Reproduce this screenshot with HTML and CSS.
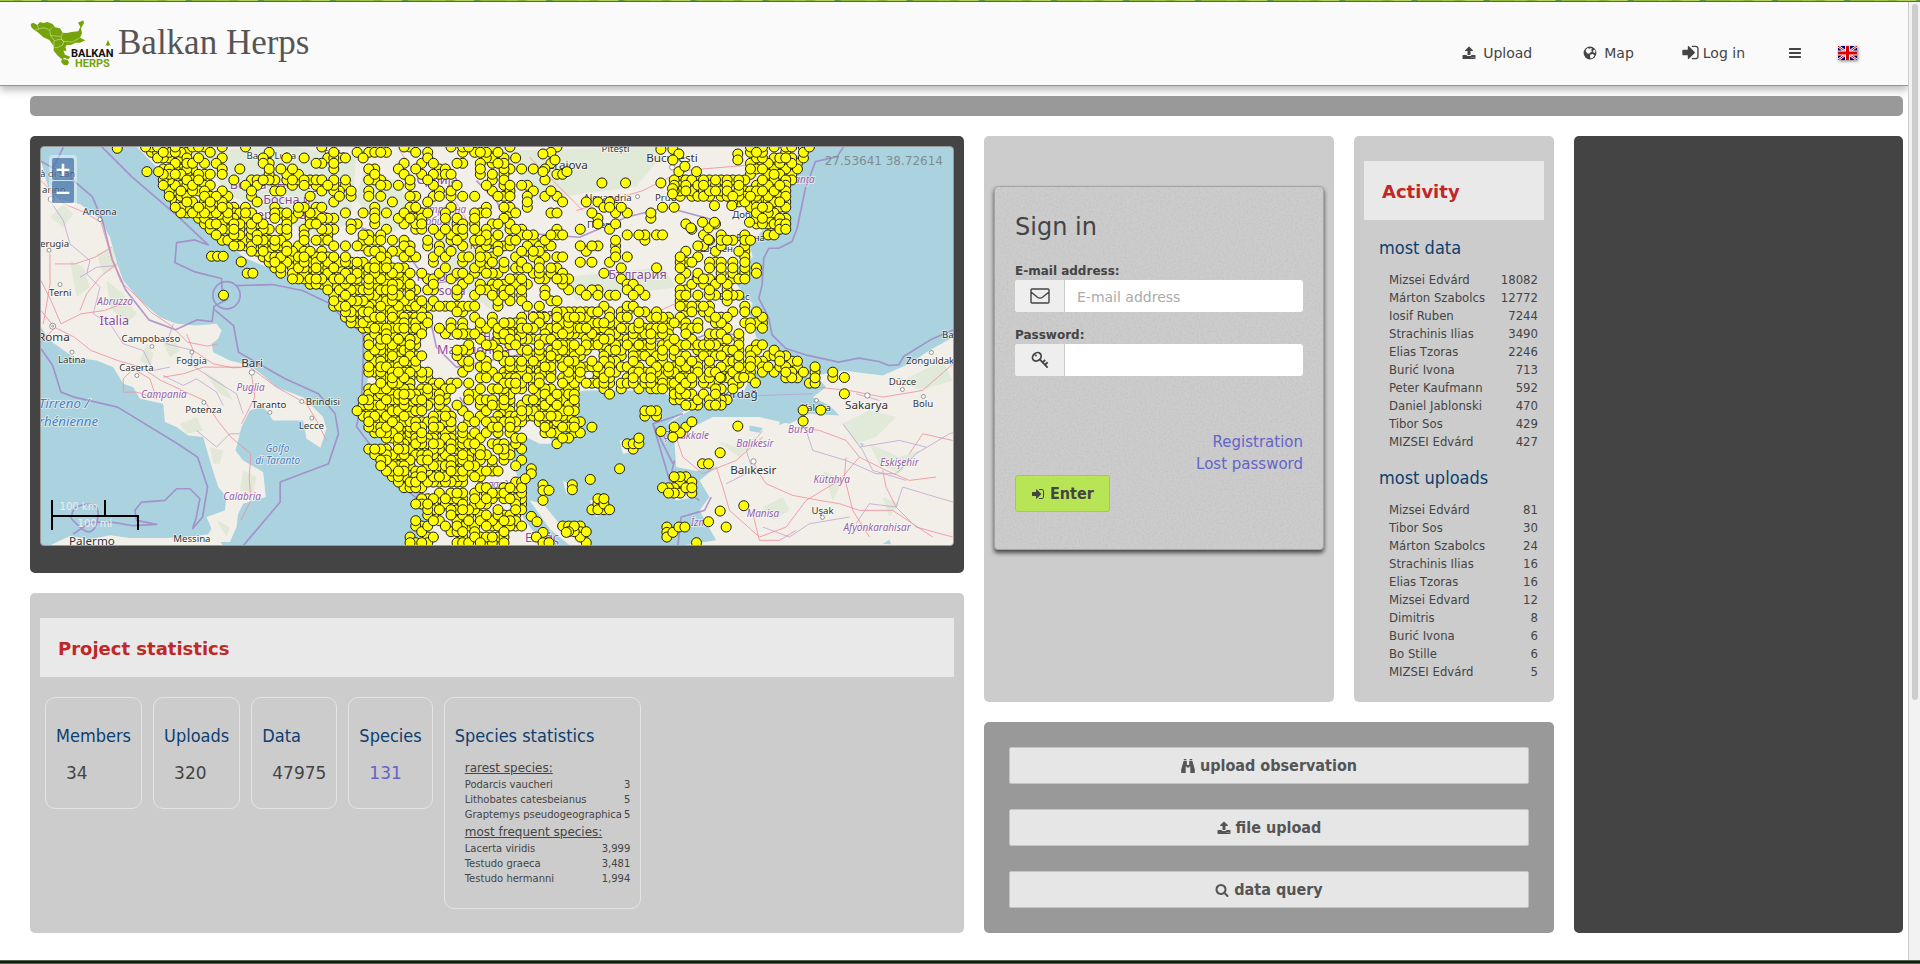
FILE: index.html
```html
<!DOCTYPE html>
<html lang="en">
<head>
<meta charset="utf-8">
<title>Balkan Herps</title>
<link rel="stylesheet" href="styles.css">
</head>
<body>
<svg class="defs" aria-hidden="true">
  <symbol id="i-upload" viewBox="0 0 1792 1792"><path d="M1344 1472q0-26-19-45t-45-19-45 19-19 45 19 45 45 19 45-19 19-45zm256 0q0-26-19-45t-45-19-45 19-19 45 19 45 45 19 45-19 19-45zm128-224v320q0 40-28 68t-68 28h-1472q-40 0-68-28t-28-68v-320q0-40 28-68t68-28h427q21 56 70.500 92t110.500 36h256q61 0 110.500-36t70.500-92h427q40 0 68 28t28 68zm-325-648q-17 40-59 40h-256v448q0 26-19 45t-45 19h-256q-26 0-45-19t-19-45v-448h-256q-42 0-59-40-17-39 14-69l448-448q18-19 45-19t45 19l448 448q31 30 14 69z"/></symbol>
  <symbol id="i-bars" viewBox="0 0 1792 1792"><path d="M1664 1344v128q0 26-19 45t-45 19h-1408q-26 0-45-19t-19-45v-128q0-26 19-45t45-19h1408q26 0 45 19t19 45zm0-512v128q0 26-19 45t-45 19h-1408q-26 0-45-19t-19-45v-128q0-26 19-45t45-19h1408q26 0 45 19t19 45zm0-512v128q0 26-19 45t-45 19h-1408q-26 0-45-19t-19-45v-128q0-26 19-45t45-19h1408q26 0 45 19t19 45z"/></symbol>
  <symbol id="i-signin" viewBox="0 0 1792 1792"><path d="M1312 896q0 26-19 45l-544 544q-19 19-45 19t-45-19-19-45v-288h-448q-26 0-45-19t-19-45v-384q0-26 19-45t45-19h448v-288q0-26 19-45t45-19 45 19l544 544q19 19 19 45zm352-352v704q0 119-84.500 203.500t-203.500 84.500h-320q-13 0-22.500-9.500t-9.500-22.500q0-4-1-20t-.5-26.500 3-23.500 10-19.500 20.500-6.500h320q66 0 113-47t47-113v-704q0-66-47-113t-113-47h-312l-11.500-1-11.500-3-8-5.500-7-9-2-13.500q0-4-1-20t-.5-26.500 3-23.500 10-19.500 20.500-6.500h320q119 0 203.500 84.500t84.500 203.500z"/></symbol>
  <symbol id="i-search" viewBox="0 0 1792 1792"><path d="M1216 832q0-185-131.500-316.500t-316.500-131.500-316.500 131.500-131.500 316.500 131.500 316.500 316.500 131.500 316.500-131.500 131.500-316.500zm512 832q0 52-38 90t-90 38q-54 0-90-38l-343-342q-179 124-399 124-143 0-273.500-55.500t-225-150-150-225-55.500-273.500 55.500-273.500 150-225 225-150 273.500-55.500 273.500 55.500 225 150 150 225 55.500 273.500q0 220-124 399l343 343q37 37 37 90z"/></symbol>
  <symbol id="i-globe" viewBox="0 0 14 14"><circle cx="7" cy="7" r="6.400"/><path d="M4.500 2l2 .8L8 2l1.200.8-1.400 1.400L9.500 5 8 6 6 7.800 4.500 7.400 2.800 5.500 2.800 4zM7.500 8.500L10 8l1.500 1.500L9.500 12l-2 .5L7 10zM10.500 4l1.400-.3.700 2.200-1.200 1-1.400-1z" fill="#fafafa"/></symbol>
  <symbol id="i-binoculars" viewBox="0 0 14 14"><path d="M2.800 0h2.600v1.300H2.800zM8.600 0h2.600v1.300H8.600zM2.600 1.900h3.200V6H8.200V1.900h3.200L13.800 10.600V14H9.300V7.500H8.300v1H5.700v-1H4.700V14H.2v-3.400z"/></symbol>
  <symbol id="i-envelope" viewBox="0 0 20 16"><path d="M2 1h16q1 0 1 1v12q0 1-1 1H2q-1 0-1-1V2q0-1 1-1zM1 4q3.500 2.800 6.500 5.200Q10 11 12.500 9.200 15.500 6.800 19 4" fill="none" stroke="currentColor" stroke-width="1.400"/></symbol>
  <symbol id="i-key" viewBox="0 0 20 20"><g fill="none" stroke="currentColor" stroke-width="2"><ellipse cx="6.500" cy="6.500" rx="5.200" ry="4.200" transform="rotate(-40 6.500 6.500)"/><path d="M9.500 9l9 9.500M12.800 12.800l3-3M15.500 15.500l3-3"/></g><circle cx="5.500" cy="5" r="1"/></symbol>
</svg>

<div class="strip"></div>
<header class="header">
  <a class="brand" href="#">
    <svg class="logo" viewBox="0 0 84 50" role="img" aria-label="Balkan Herps logo">
      <g transform="scale(.3333) translate(-90 -57)">
        <path fill="#76a30a" d="M92 72L100 68 112 75 120 66 130 69 142 66 158 72 165 82 180 85 188 98 200 99 215 96 235 94 241 80 234 68 250 61 252 70 243 85 246 100 240 113 256 121 240 128 226 128 215 134 200 135 196 142 200 152 190 152 195 164 211 170 205 178 192 173 189 178 203 179 207 188 202 196 192 195 183 186 186 178 174 168 161 152 161 138 148 120 130 112 115 98 100 88 94 82z"/>
        <path fill="none" stroke="#e4edc8" stroke-width="1.500" d="M112 75l4 12-12 4M116 87q18-8 32 4l10-10M150 90l2 17 10 14M188 98l-5 14 6 12 28 2 22-12M152 107l30 2M161 138l2-16 20-5 8 8-3 10-16 8-10 0"/>
        <path fill="#76a30a" d="M324 120l8 18-4-3-5 4-4-4-3 3z"/>
      </g>
      <text class="logo-a" x="41" y="38">BALKAN</text>
      <text class="logo-b" x="45" y="48">HERPS</text>
    </svg>
    <span class="brand-name">Balkan Herps</span>
  </a>
  <nav class="nav">
    <a href="#"><svg class="icon"><use href="#i-upload"/></svg>Upload</a>
    <a href="#"><svg class="icon"><use href="#i-globe"/></svg>Map</a>
    <a href="#" class="nav-login"><svg class="icon icon-lg"><use href="#i-signin"/></svg>Log in</a>
    <button type="button" aria-label="Menu"><svg class="icon"><use href="#i-bars"/></svg></button>
    <a href="#" aria-label="English"><svg class="flag" viewBox="0 0 19 14"><path fill="#006" d="M0 0h19v14H0z"/><path stroke="#fff" stroke-width="2.600" d="M0 0l19 14M19 0L0 14"/><path stroke="#c00" d="M0 0l19 14M19 0L0 14"/><path stroke="#fff" stroke-width="5" d="M9.500 0v14M0 7h19"/><path stroke="#d00" stroke-width="3" d="M9.500 0v14M0 7h19"/></svg></a>
  </nav>
</header>

<main class="page">
  <div class="bar"></div>
  <div class="layout">
    <div class="col">
      <section class="panel dark map-panel">
        <div class="map">
          <svg class="map-svg" viewBox="33 48 2738 1197" preserveAspectRatio="xMidYMid slice">
            <g class="land">
              <path d="M33 90l27 100 40 20 50 10 60 45 30 55 22 80 18 50 50 60 60 50 50 20 60 5 60-5 15 20-10 25-20 15 5 25 50 25 60 15 40 30 40 35 80 30 60 60 10 35-18 57-42-27-10-55-90 0-30-42-40 12-25 50-18 70 23 30 60 35 8 75-68 20-15 30-5 40-20 45H520l25-40-15-35 55-20 5-40-25-30-25-80-20-70-45-5-35-25-35-15-5-55-70-15-20-35-30-10-30-50-50-20-70-10-70-50-27-40z"/>
              <path d="M60 1245l60-28 60 10 60-12 60 8 110 0 80-5 60-8 30 35z"/>
              <path d="M320 48l80 82 50 100 110 70 80 80 120 50 100 30 90 100 60 50 10 90-20 150 80 90-70 10 70 90 100 50 40 60-70 95h390l-60-85-10-100-25-80 5-80 80 40h40l-40-90 130 40-50-50-10-50 70-10h220l90 50-80 60 80-50 80-50h80l30-65 90-5 80 20-20-40-60-20-80-60-20-70 10-30-50-60-20-40 70-40-10-40 40-40 60-30v-120l30-60 60-62z"/>
              <path d="M2360 735l80-15 120 15 80-35 60-40 71-40v625h-811l100-15-50-90 30-40-30-50 50-40-60 12-60-12-5-70 15-30 100-50h140l90 20 60-30 90 5-30-30-50-25 40-30z"/>
              <path d="M1500 1110l40 10 50 60 60 40 20 25h-50l-60-50zM1600 1050l30 20-20 20zM1680 1110l50-10 10 40-40 20zM1830 840l60-10 10 30-50 10zM1890 1060l80-10 30 50-60 10zM1770 930l60 0 0 30-50 10z"/>
            </g>
            <g class="green">
              <path d="M200 370l50-20 10 60-40 20zM120 390l40 20 20 60-40 30zM230 450l50 40 40 60-30 30-50-50zM60 260l40-40 30 30-30 40zM400 640l30-20 20 40-30 20zM350 640l20 30-10 40-30-20zM520 720l60 40 30 50-40-20zM450 880l50-20 20 40-50 10zM540 950l40 10-10 40-20 0zM640 1020l40 20-10 50-40-10zM560 1170l40 20-10 30z"/>
              <path d="M480 60l300-12 200 30-20 200-100 40-250-120zM1000 120l100 30 60 120-80 40-100-100zM1420 60l500-12-100 120-300 40zM1220 300l200 50-20 200-160-120zM1600 440l300-30 40 60-300 40zM2200 1130l60-30 20 40-50 30zM2440 880l80-40 80 20-60 60-60 20zM2620 750l120-60 30 60-100 30zM2520 940l90 40 60-20-60 70-60-30zM2060 930l60 20 60-30-50 60zM2380 1020l60 30-30 60zM2200 640l60 20-10 40-50 0zM2560 1100l50 20-30 40z"/>
            </g>
            <g class="water"><path d="M2160 885l40 8-10 14-30-5zM2250 868l20 8-20 8zM2560 1240l20-12 5 14zM2490 938l14 2-6 8z"/></g>
            <g class="border">
              <path d="M100 50l-30 60M215 48l90 90 140 120 90 85-40-15-55 8-5 60 60 28 80 20 2 38 15 24-40 22-5 45-45-5-65 30-80-30-70-90-40-90-30-120-30-70-70-60-110-60"/>
              <path d="M551 535l60 50 15 80 140 80 100 45 50 60 10 60-30 90-145 55 0 60-110 130M33 655l35 50 25 80 40 15 130 30 180 110 60 40 30 90-15 90-30 35 10-30 12-60-30-30-40 0-35 35-70 5-20 25 5 30 60 12-70 4-60-10-70 0-50 35M125 1160q0-35 45-38t32 50-50 20-27-32"/>
              <circle cx="590" cy="494" r="41"/>
              <path d="M618 465l110-3 90 18 80 38 50 55 52 35v80l-5 130-15 70 60 80 30 60 60 50 30 25 50-100M2443 48l-20 30-65 15-30 80-25 120-15 40-40 20-30 0-15 30-5 80-10 40 30 60 10 50 40 40 60 20 100 22 60-12 60 10 30 12 30-2 15-25 80-50 70-30M2045 1100l-20 40-70 20-10 85M1935 990l-15 60 90 60M1930 1000l-60-120 90-30M1870 880l50 170"/>
              <path d="M960 280l60 20 40 60 80 20 60 80 140-20 80 60M1340 150l60 60 30 60 80 40 140 10 140-60 120-30 150 40M1200 560l20 90 60 60 200-40 160-60 120 10 200 20 100-40 80 20M1290 800l60 90-20 100"/>
            </g>
            <g class="thin">
              <path d="M60 210l40 60 20 70 60 50-10 40 40 40-20 80 50 30 40 60 60 20 30 60 50-10M260 405l-60 5-50 30M430 580l-20 60 80 20-10 40 60 40 80 50 20 60M400 735l60 30 40-20 60 40 20 40M500 900l60 50 40-40 30 0M1510 570l40 40M1400 1080l80 60M2200 900l-50 60 20 60-80 40M2330 900l20 60 100 30 90 40 60 0 60-60 100-60 71-20M2440 880l60 80 30 60 100 30M2480 1180l40-60 80 10 20-60 100 30 51 15M2200 1190l80 30 60-40 120-20M2490 950l120-20 80 20M2480 790l70 20M2050 800l300-10"/>
            </g>
            <g class="road">
              <path d="M33 150l70 70 60 25 50 30 30 100 15 40 15 40 45 40 45 50 60 40 50 50 60 12 30-7M33 540l40 50 60 30 50 40 80 30 70 20 60 40 130 60 40 60 40 50 60 50-5 70 5 70-30 60M33 450l30 60 30 70 60-30 70-10 80-30M470 610l20 50 60 40 60 12 50-2 80 60 90 50 30 50 30 60M400 740l60-10 60-20 120 0M665 730l10 70-40 80M60 370v90l-20 120M75 590l-45 50M75 400l60 0 60-20 50-30M280 745l30-30 50 30 20 60-60-20-40 0zM150 540l20-50 40-50 50-40"/>
              <path d="M1110 60l40 60 120 80 60 100M1500 80l100 100 60 60M1560 540l200 60 220-100 180-60M1640 240l200-60 120-60 240-20 60 10M2360 770l100 10 100 20 120-20 91-80M2300 890l70 10 80 30 40 50 80 40 70 30 80-10M2060 1010l20 60 20 70 90 80 80-30 60-80 100-60 60-70M2170 990l20 40 20 30 80 35 80 15 60 10 60 20 100 0 120 80M2450 980l-5 60 25 100 50 80M1940 920l20 60 60 50 100-40 80-70M2560 1020l10 50 30 60 60 60 110 30M2170 1150l20 80 60 0 50-30M2640 970l40-60 90 20"/>
              <path d="M1260 830l40 60 40 60 60 60"/>
            </g>
            <g class="town">
              <circle cx="210" cy="267" r="6"/><circle cx="57" cy="359" r="6"/><circle cx="90" cy="462" r="6"/><circle cx="68" cy="587" r="9"/><circle cx="68" cy="587" r="3"/><circle cx="126" cy="665" r="6"/><circle cx="366" cy="648" r="6"/><circle cx="321" cy="735" r="6"/><circle cx="486" cy="665" r="6"/><circle cx="666" cy="726" r="8"/><circle cx="522" cy="816" r="6"/><circle cx="720" cy="846" r="6"/><circle cx="816" cy="813" r="6"/><circle cx="846" cy="863" r="6"/><circle cx="64" cy="206" r="9"/><circle cx="1824" cy="198" r="6"/><circle cx="1928" cy="110" r="8"/><circle cx="2706" cy="666" r="6"/><circle cx="2619" cy="777" r="6"/><circle cx="2682" cy="798" r="6"/><circle cx="2514" cy="795" r="8"/><circle cx="2361" cy="810" r="6"/><circle cx="2172" cy="993" r="8"/><circle cx="2379" cy="1161" r="6"/>
            </g>
            <g class="city">
              <text x="30" y="138">à di San</text><text x="36" y="187">arino</text><text x="158" y="253">Ancona</text><text x="30" y="350">erugia</text><text x="57" y="495">Terni</text><text class="big" x="24" y="630">Roma</text><text x="84" y="697">Latina</text><text x="275" y="635">Campobasso</text><text x="268" y="722">Caserta</text><text x="439" y="700">Foggia</text><text class="big" x="634" y="710">Bari</text><text x="466" y="847">Potenza</text><text x="666" y="832">Taranto</text><text x="828" y="825">Brindisi</text><text x="807" y="897">Lecce</text><text x="430" y="1234">Messina</text><text class="big" x="117" y="1245">Palermo</text>
              <text x="878" y="79">Tuzla</text><text x="650" y="84">Banja Luka</text><text x="1716" y="64">Pitești</text><text class="big" x="1850" y="93">București</text><text class="big" x="1552" y="116">Craiova</text><text x="1662" y="210">Alexandria</text><text x="1876" y="210">Prud</text><text x="2108" y="262">Добрич</text><text x="1672" y="293">Плевен</text><text x="2120" y="330">Варна</text><text x="2010" y="365">Шумен</text><text x="1985" y="450">Сливен</text><text x="2068" y="508">Бургас</text><text class="big" x="2044" y="803">Tekirdağ</text><text class="big" x="2447" y="837">Sakarya</text><text x="2578" y="765">Düzce</text><text x="2650" y="831">Bolu</text><text x="2630" y="702">Zonguldak</text><text x="2738" y="622">Bartın</text><text x="2318" y="843">Yalova</text><text class="big" x="2102" y="1032">Balıkesir</text><text x="2346" y="1150">Uşak</text><text x="1320" y="355">Крајова</text><text x="1480" y="555">Пловдив</text>
            </g>
            <g class="region">
              <text x="202" y="524">Abruzzo</text><text x="333" y="804">Campania</text><text x="620" y="782">Puglia</text><text x="580" y="1110">Calabria</text><text x="1146" y="248">Централна</text><text x="1170" y="284">Србија</text><text x="2220" y="156">Constanța</text><text x="1900" y="927">Çanakkale</text><text x="2120" y="950">Balıkesir</text><text x="2276" y="908">Bursa</text><text x="2552" y="1006">Eskişehir</text><text x="2352" y="1058">Kütahya</text><text x="2152" y="1160">Manisa</text><text x="2442" y="1203">Afyonkarahisar</text><text x="1984" y="1186">İzmir</text><text x="1340" y="1072">Θεσσαλία</text>
            </g>
            <g class="country">
              <text x="209" y="582">Italia</text><text x="600" y="174">Bosna i Hercegovina</text><text x="700" y="220">Босна и</text><text x="660" y="264">Херцеговина</text><text x="1160" y="160">Србија</text><text x="1160" y="452">Kosovo</text><text x="1180" y="494">Kosova</text><text x="1250" y="628">Северна</text><text x="1222" y="672">Македонија</text><text x="1736" y="444">България</text><text x="1486" y="1236">Ελλάς</text>
            </g>
            <g class="sea"><text class="sea-l" x="26" y="832">Tirreno /</text><text class="sea-l" x="26" y="888">rhénienne</text><text x="707" y="965">Golfo</text><text x="676" y="1000">di Taranto</text></g>
            <g id="dots" class="dots"></g>
          </svg>
          <div class="zoom"><button type="button" aria-label="Zoom in">+</button><button type="button" aria-label="Zoom out">−</button></div>
          <div class="coords">27.53641 38.72614</div>
          <div class="scale"><div class="scale-km">100 km</div><div class="scale-mi">100 mi</div></div>
        </div>
      </section>
      <section class="panel light grow">
        <h2 class="head">Project statistics</h2>
        <div class="cards">
          <div class="card"><h3>Members</h3><p>34</p></div>
          <div class="card"><h3>Uploads</h3><p>320</p></div>
          <div class="card"><h3>Data</h3><p>47975</p></div>
          <div class="card"><h3>Species</h3><p><a href="#">131</a></p></div>
          <div class="card"><h3>Species statistics</h3>
            <div class="species">
              <table>
                <caption>rarest species:</caption>
                <tr><td>Podarcis vaucheri</td><td>3</td></tr>
                <tr><td>Lithobates catesbeianus</td><td>5</td></tr>
                <tr><td>Graptemys pseudogeographica</td><td>5</td></tr>
              </table>
              <table>
                <caption>most frequent species:</caption>
                <tr><td>Lacerta viridis</td><td>3,999</td></tr>
                <tr><td>Testudo graeca</td><td>3,481</td></tr>
                <tr><td>Testudo hermanni</td><td>1,994</td></tr>
              </table>
            </div>
          </div>
        </div>
      </section>
    </div>

    <div class="col">
      <div class="split">
        <section class="panel light login-panel">
          <form class="login">
            <svg class="grain" aria-hidden="true"><filter id="grain"><feTurbulence type="fractalNoise" baseFrequency=".5" numOctaves="3" seed="4"/><feColorMatrix values="0 0 0 0 .4  0 0 0 0 .4  0 0 0 0 .4  1.600 0 0 0 -.6"/></filter><rect width="100%" height="100%" filter="url(#grain)"/></svg>
            <h1>Sign in</h1>
            <label for="email">E-mail address:</label>
            <div class="field"><span class="addon"><svg><use href="#i-envelope"/></svg></span><input id="email" type="email" placeholder="E-mail address"></div>
            <label for="pass">Password:</label>
            <div class="field"><span class="addon"><svg><use href="#i-key"/></svg></span><input id="pass" type="password"></div>
            <div class="links"><a href="#">Registration</a><a href="#">Lost password</a></div>
            <button class="enter" type="submit"><svg class="icon"><use href="#i-signin"/></svg>Enter</button>
          </form>
        </section>
        <section class="panel light">
          <h2 class="head">Activity</h2>
          <div class="activity">
            <h3>most data</h3>
            <table>
              <tr><td>Mizsei Edvárd</td><td>18082</td></tr><tr><td>Márton Szabolcs</td><td>12772</td></tr><tr><td>Iosif Ruben</td><td>7244</td></tr><tr><td>Strachinis Ilias</td><td>3490</td></tr><tr><td>Elias Tzoras</td><td>2246</td></tr><tr><td>Burić Ivona</td><td>713</td></tr><tr><td>Peter Kaufmann</td><td>592</td></tr><tr><td>Daniel Jablonski</td><td>470</td></tr><tr><td>Tibor Sos</td><td>429</td></tr><tr><td>MIZSEI Edvárd</td><td>427</td></tr>
            </table>
            <h3>most uploads</h3>
            <table>
              <tr><td>Mizsei Edvárd</td><td>81</td></tr><tr><td>Tibor Sos</td><td>30</td></tr><tr><td>Márton Szabolcs</td><td>24</td></tr><tr><td>Strachinis Ilias</td><td>16</td></tr><tr><td>Elias Tzoras</td><td>16</td></tr><tr><td>Mizsei Edvard</td><td>12</td></tr><tr><td>Dimitris</td><td>8</td></tr><tr><td>Burić Ivona</td><td>6</td></tr><tr><td>Bo Stille</td><td>6</td></tr><tr><td>MIZSEI Edvárd</td><td>5</td></tr>
            </table>
          </div>
        </section>
      </div>
      <section class="panel mid actions">
        <button type="button"><svg class="icon"><use href="#i-binoculars"/></svg>upload observation</button>
        <button type="button"><svg class="icon"><use href="#i-upload"/></svg>file upload</button>
        <button type="button"><svg class="icon"><use href="#i-search"/></svg>data query</button>
      </section>
    </div>

    <aside class="panel dark"></aside>
  </div>
</main>
<footer class="footer"></footer>
<div class="track"><div class="thumb"></div></div>
<script src="map.js"></script>
</body>
</html>
```
FILE: styles.css
```css
* { box-sizing: border-box; }
body { margin: 0; padding-right: 12px; background: #fff; color: #444; font: 14px/20px "DejaVu Sans", sans-serif; }
h1, h2, h3, p { margin: 0; font-weight: normal; }
a { color: #6464c8; text-decoration: none; }
table { border-collapse: collapse; }
th, td { padding: 0; text-align: left; font-weight: normal; }
button, input { font: inherit; color: inherit; }
.defs { display: none; }
.icon { width: 14px; height: 14px; fill: currentColor; }
.icon-lg { width: 19px; height: 19px; }

.strip { height: 2px; margin-right: -12px; background: repeating-linear-gradient(100deg, #a6cc48 0 12px, #8fb83c 14px 20px, #b7d860 24px 40px, #5f9a4a 42px 46px, #96c040 48px 71px); border-bottom: 1px solid #4e7a1a; }
.header { display: flex; justify-content: space-between; height: 84px; padding: 0 51px 0 30px; background: #fafafa; border-bottom: 1px solid #8f9890; box-shadow: 0 4px 8px rgba(0, 0, 0, .28); }
.brand { display: flex; gap: 4px; padding-top: 17px; color: #555; }
.logo { width: 84px; height: 50px; overflow: visible; }
.logo text { font: bold 11px Roboto, "Liberation Sans", sans-serif; }
.logo-a { fill: #111; }
.logo-b { fill: #76a30a; }
.brand-name { font: 35px/48px "Liberation Serif", serif; }
.nav { display: flex; align-items: center; gap: 36px; padding-top: 18px; }
.nav a, .nav button { display: flex; align-items: center; gap: 7px; padding: 0; border: 0; background: none; color: #444; }
.nav a:first-child { padding-right: 15px; }
.nav a:nth-child(2) { padding-right: 11px; }
.nav .nav-login { gap: 3px; padding-right: 7px; }
.flag { width: 19px; height: 14px; box-shadow: 1px 1px 3px rgba(0, 0, 0, .5); }

.page { padding: 10px 5px 27px 30px; }
.bar { height: 20px; background: #999; border-radius: 5px; }
.layout { display: grid; grid-template-columns: 934fr 570fr 329fr; gap: 20px; margin-top: 20px; }
.col { display: flex; flex-direction: column; gap: 20px; min-width: 0; }
.panel { padding: 25px 10px; border-radius: 5px; }
.dark { background: #444; }
.light { background: #ccc; }
.mid { background: #999; }
.grow { flex: 1; padding-bottom: 20px; }

.map-panel { padding: 10px 10px 27px; }
.map { position: relative; aspect-ratio: 914 / 400; overflow: hidden; border: 1px solid #999; border-radius: 4px; background: #aad3df; }
.map-svg { display: block; width: 100%; height: 100%; }
.land { fill: #f2efe9; }
.green { fill: #c8e0c0; opacity: .4; }
.water { fill: #aad3df; }
.border { fill: none; stroke: #a07cc4; stroke-width: 5; stroke-linejoin: round; opacity: .75; }
.thin { fill: none; stroke: #b89ad0; stroke-width: 3; stroke-linejoin: round; opacity: .7; }
.road { fill: none; stroke: #f08c9c; stroke-width: 3; stroke-linejoin: round; opacity: .8; }
.town { fill: #fff; stroke: #666; stroke-width: 2; }
.map-svg text { font-family: "Noto Sans", sans-serif; paint-order: stroke; stroke: #fff; stroke-opacity: .6; stroke-width: 5px; }
.city { font-size: 29px; fill: #333; }
.big { font-size: 35px; }
.region { font-size: 30px; font-style: italic; fill: #9560a8; }
.country { font-size: 38px; fill: #8d4b9b; }
.sea { font-size: 30px; font-style: italic; fill: #4f80bd; }
.sea-l { font-size: 40px; }
.dots { fill: #ff0; stroke: #1a1a1a; stroke-width: 3; }
.zoom { position: absolute; top: 8px; left: 8px; display: flex; flex-direction: column; gap: 1px; padding: 3px; border-radius: 4px; background: rgba(255, 255, 255, .4); }
.zoom button { width: 22px; height: 22px; padding: 0; border: 0; border-radius: 2px; background: rgba(0, 60, 136, .5); color: #fff; font: bold 20px/22px "DejaVu Sans", sans-serif; }
.coords { position: absolute; top: 4px; right: 10px; color: #808c90; font-size: 12px; }
.scale { position: absolute; left: 10px; bottom: 15px; width: 88px; color: #eee; font-size: 10px; line-height: 14px; text-align: center; }
.scale-km { width: 55px; height: 15px; border: solid #000; border-width: 0 2px; }
.scale-mi { height: 15px; border: solid #000; border-width: 2px 2px 0; }

.head { padding: 2px 18px 0; background: #e9e9e9; color: #c02828; font-size: 18px; font-weight: bold; line-height: 57px; }
.cards { display: flex; align-items: flex-start; gap: 11px; margin: 20px 5px 0; }
.card { padding: 26px 10px 16px; border: 1px solid #e4e4e4; border-radius: 10px; }
h3 { color: #0d3f70; font: 18px/24px "DejaVu Sans Condensed", "DejaVu Sans", sans-serif; }
.card p { margin-top: 13px; padding: 0 0 7px 10px; font-size: 17px; line-height: 24px; }
.species { display: flex; flex-direction: column; gap: 2px; margin: 12px 0 6px 10px; font-size: 10px; line-height: 15px; }
.species caption { font-size: 12px; line-height: 17px; text-align: left; text-decoration: underline; }
.species td:last-child { padding-left: 2px; text-align: right; }

.split { display: grid; grid-template-columns: 350fr 200fr; gap: 20px; }
.login-panel { padding: 50px 10px; }
.login { position: relative; display: flex; flex-direction: column; padding: 26px 20px 37px; border: 1px solid #a4a4a4; border-radius: 4px; background: #cdcdcd; box-shadow: 0 3px 4px rgba(0, 0, 0, .65); }
.login > * { position: relative; }
.login .grain { position: absolute; inset: 0; width: 100%; height: 100%; opacity: .35; }
.login h1 { margin-bottom: 21px; font-size: 24px; line-height: 28px; }
.login label { font-size: 12px; font-weight: bold; line-height: 18px; }
.field { display: flex; height: 32px; margin-bottom: 14px; border-radius: 3px; background: #fff; overflow: hidden; }
.addon { display: flex; flex: 0 0 50px; align-items: center; justify-content: center; border-right: 1px solid #ccc; background: #eee; color: #444; }
.addon svg { width: 20px; height: 18px; fill: currentColor; }
.field input { flex: 1; min-width: 0; padding: 2px 12px 0; border: 0; background: none; outline: 0; }
.field input::placeholder { color: #aaa; }
.links { display: flex; flex-direction: column; align-items: flex-end; margin-top: 41px; font-size: 15px; line-height: 22px; }
.enter { display: flex; align-self: flex-start; align-items: center; gap: 5px; height: 37px; padding: 0 15px; border: 1px solid #a4cc44; border-radius: 3px; background: #b8e556; font: bold 16px "DejaVu Sans Condensed", "DejaVu Sans", sans-serif; }

.activity { padding: 1px 6px 0 15px; margin-bottom: -4px; }
.activity h3 { padding-top: 15px; }
.activity table { width: calc(100% - 10px); margin: 11px 0 0 10px; font: 13px/18px "DejaVu Sans Condensed", "DejaVu Sans", sans-serif; }
.activity td { white-space: nowrap; }
.activity td:last-child { text-align: right; }

.actions { display: flex; flex-direction: column; gap: 25px; padding: 25px; }
.actions button { display: flex; align-items: center; justify-content: center; gap: 5px; height: 37px; border: 1px solid #c4c4c4; border-radius: 2px; background: #e6e6e6; color: #555; font: bold 16px "DejaVu Sans Condensed", "DejaVu Sans", sans-serif; }

.footer { height: 4px; margin-right: -12px; border: solid #4a664d; border-width: 1px 0; background: #151a16; }
.track { position: fixed; top: 2px; right: 0; bottom: 4px; width: 12px; padding: 2px 3px; border-left: 1px solid #ccc; background: #f2f2f2; }
.thumb { width: 6px; height: 73%; border-radius: 3px; background: #cdcdcd; }
```
FILE: map.js
```javascript
// Observation cells: areas filled to a given density on the survey grid.
const areas = [
  [.85, [330,40, 400,110, 400,180, 440,240, 530,290, 600,350, 680,370, 760,440, 850,465, 885,500, 960,580, 1020,600, 1000,690, 1010,760, 980,840, 1010,890, 1060,925, 1080,950, 990,945, 1040,990, 1070,1030, 1130,1085, 1200,1070, 1350,1050, 1300,960, 1250,850, 1260,760, 1200,740, 1170,640, 1200,560, 1160,470, 1080,380, 1010,350, 900,380, 740,320, 700,270, 600,230, 540,180, 470,60]],
  [.5, [470,60, 420,40, 360,40, 400,110, 470,130]],
  [.28, [470,40, 1310,40, 1310,350, 1080,380, 1010,350, 900,380, 740,320, 600,230, 500,130]],
  [.35, [1080,380, 1310,350, 1410,500, 1300,570, 1200,540]],
  [.55, [1310,40, 1440,40, 1530,200, 1470,290, 1380,200]],
  [.45, [1310,160, 1470,290, 1620,280, 1650,440, 1600,520, 1410,540, 1340,400]],
  [.18, [1500,40, 1600,40, 1640,280, 1530,260]],
  [.26, [1640,200, 1950,200, 1900,330, 1850,350, 1650,350]],
  [.24, [1620,340, 1900,380, 1880,500, 1640,500]],
  [.75, [2160,40, 2350,40, 2310,110, 2280,170, 2280,290, 2210,330, 2160,225, 2050,205, 1920,205, 1920,145, 2150,145]],
  [.45, [1950,380, 2010,300, 2060,320, 2110,380, 2190,290, 2190,450, 2110,450, 2220,560, 2200,605, 2120,650, 1950,560]],
  [.16, [1950,270, 2200,270, 2150,400, 2000,400]],
  [.7, [1610,540, 1780,520, 1960,560, 2110,540, 2130,640, 2210,640, 2280,680, 2370,710, 2370,770, 2220,740, 2140,745, 2080,830, 1970,830, 1900,790, 1800,770, 1750,800, 1650,750, 1610,860]],
  [.68, [1410,560, 1610,540, 1640,860, 1590,880, 1480,880, 1410,920]],
  [.42, [1200,570, 1410,540, 1440,900, 1300,900, 1260,760, 1290,700]],
  [.5, [1250,850, 1440,860, 1485,930, 1480,1000, 1350,1050, 1290,960]],
  [.62, [1160,1090, 1270,1080, 1480,1050, 1490,1180, 1430,1245, 1300,1260, 1230,1180, 1200,1260, 1130,1260]],
  [.6, [1530,880, 1620,850, 1700,890, 1600,945, 1550,945]],
  [.85, [1830,830, 1890,830, 1890,860, 1830,860]],
  [.8, [1770,940, 1850,910, 1850,940, 1810,960, 1770,960]],
  [.75, [1890,1040, 1960,1030, 2000,1060, 1990,1100, 1960,1120, 1890,1080]],
  [.85, [1670,1110, 1730,1100, 1750,1150, 1670,1150]],
  [.6, [1590,1170, 1680,1180, 1680,1245, 1600,1210]],
  [.6, [1920,890, 2000,850, 2000,880, 1930,920]]
];
// Single cells away from the filled areas.
const singles = [262,53, 351,123, 386,123, 581,494, 545,377, 563,377, 580,377, 634,394, 652,428, 669,428, 1540,70, 1576,88, 1540,123, 1612,123, 1717,157, 1788,157, 1894,157, 1894,56, 1930,56, 1948,70, 1930,88, 1948,123, 1966,107, 2001,123, 2125,70, 2125,88, 1929,174, 1929,190, 2055,225, 2107,225, 1984,292, 2037,292, 2055,275, 2019,275, 2160,275, 2037,327, 1894,903, 1930,920, 2125,887, 2072,967, 2019,1000, 2037,1000, 1770,1015, 1682,1047, 1628,1063, 1628,1078, 1540,1063, 1540,1080, 1558,1080, 1540,1110, 1505,1015, 1505,1030, 1487,1045, 1505,1158, 1522,1174, 2072,1142, 2143,1126, 2037,1174, 2090,1190, 1912,1190, 1912,1206, 1912,1220, 1930,1206, 1948,1190, 1966,1190, 2001,1237, 2321,839, 2321,872, 2374,839, 2445,790, 2445,741, 2410,741, 2410,725, 2072,741, 2143,741, 2178,757, 1540,1206, 1520,1220, 1540,1237, 1558,1237, 1610,1206];

function inside(x, y, p) {
  let hit = false;
  for (let i = 0, j = p.length - 2; i < p.length; j = i, i += 2) {
    if ((p[i + 1] > y) !== (p[j + 1] > y) &&
        x < (p[j] - p[i]) * (y - p[i + 1]) / (p[j + 1] - p[i + 1]) + p[i]) hit = !hit;
  }
  return hit;
}
let seed = 91;
const rand = () => (seed = (seed * 16807) % 2147483647) / 2147483647;

const cells = [];
for (let r = -27; r < 46; r++) {
  for (let c = -118; c < 20; c++) {
    const x = 2322 + c * 17.63, y = 494 + r * 16.5;
    const area = areas.find(a => inside(x, y, a[1]));
    if (area && rand() < area[0]) cells.push([x, y, rand()]);
  }
}
cells.sort((a, b) => a[2] - b[2]);
for (let i = 0; i < singles.length; i += 2) cells.push([singles[i], singles[i + 1]]);

const layer = document.getElementById('dots');
for (const [x, y] of cells) {
  const dot = document.createElementNS('http://www.w3.org/2000/svg', 'circle');
  dot.setAttribute('cx', Math.round(x));
  dot.setAttribute('cy', Math.round(y));
  dot.setAttribute('r', 15);
  layer.appendChild(dot);
}
```
